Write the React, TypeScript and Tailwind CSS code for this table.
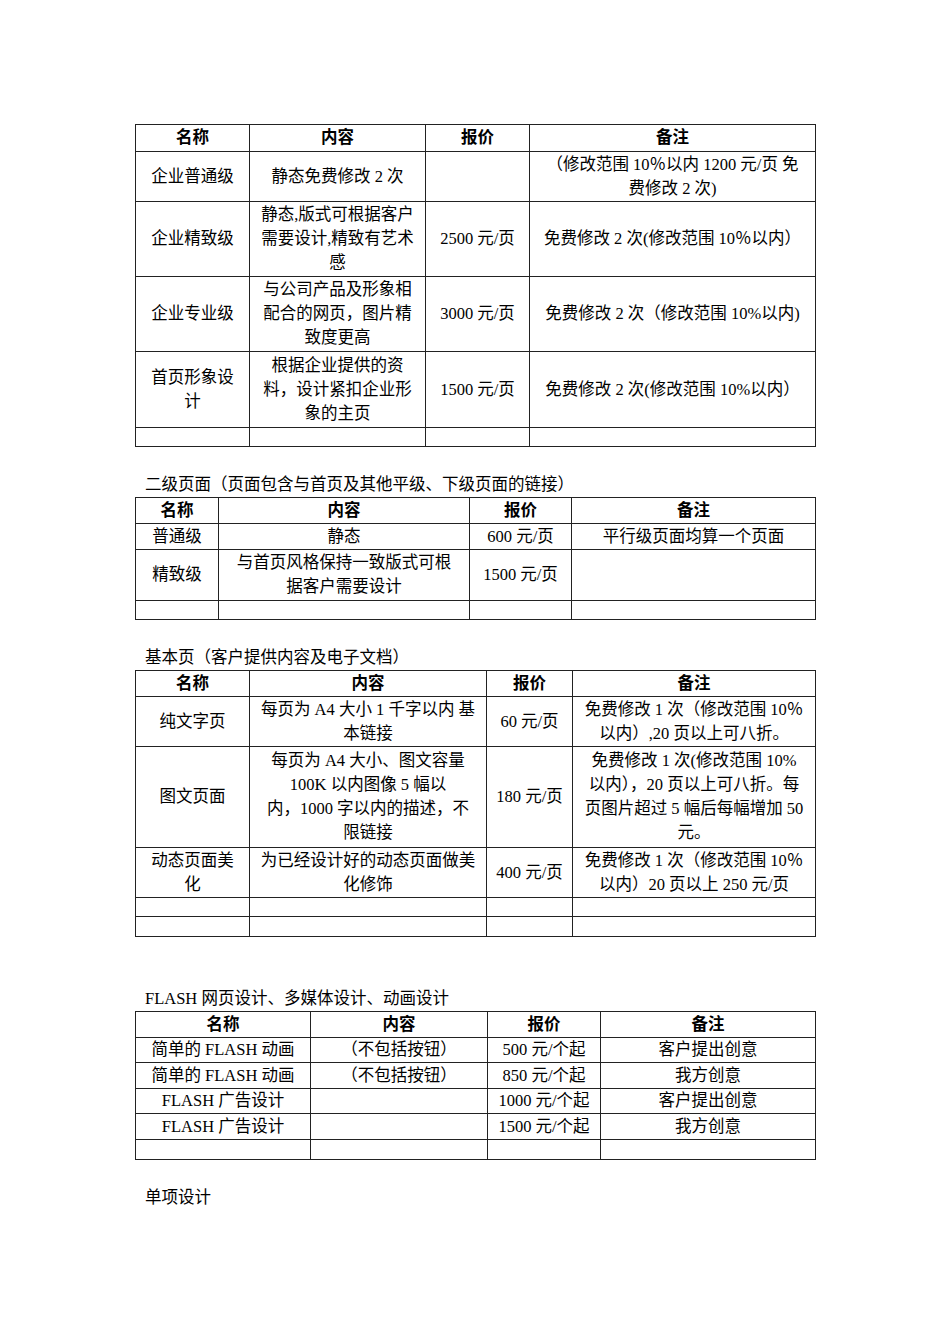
import React from "react";

type Row = { h: number; cells: string[][] };

const FONT = '"Liberation Serif", "Noto Sans CJK SC", serif';

function Cell({ lines, bold }: { lines: string[]; bold?: boolean }) {
  return (
    <td className={`border border-[#222] px-[7px] py-0 text-center align-middle whitespace-nowrap leading-[24px] ${bold ? "font-bold" : ""}`}>
      {lines.map((l, i) => (
        <React.Fragment key={i}>
          {i > 0 && <br />}
          {l}
        </React.Fragment>
      ))}
    </td>
  );
}

function DocTable({ cols, header, rows }: { cols: number[]; header: number; rows: Row[] }) {
  const heads = ["名称", "内容", "报价", "备注"];
  return (
    <table className="w-[680px] table-fixed border-collapse">
      <colgroup>
        {cols.map((w, i) => (
          <col key={i} style={{ width: w }} />
        ))}
      </colgroup>
      <tbody>
        <tr style={{ height: header }}>
          {heads.map((h) => (
            <Cell key={h} lines={[h]} bold />
          ))}
        </tr>
        {rows.map((r, i) => (
          <tr key={i} style={{ height: r.h }}>
            {r.cells.map((c, j) => (
              <Cell key={j} lines={c} />
            ))}
          </tr>
        ))}
      </tbody>
    </table>
  );
}

const t1: Row[] = [
  { h: 50, cells: [["企业普通级"], ["静态免费修改 2 次"], [""], ["（修改范围 10％以内 1200 元/页 免", "费修改 2 次)"]] },
  { h: 75, cells: [["企业精致级"], ["静态,版式可根据客户", "需要设计,精致有艺术", "感"], ["2500 元/页"], ["免费修改 2 次(修改范围 10％以内）"]] },
  { h: 75, cells: [["企业专业级"], ["与公司产品及形象相", "配合的网页，图片精", "致度更高"], ["3000 元/页"], ["免费修改 2 次（修改范围 10%以内)"]] },
  { h: 76, cells: [["首页形象设", "计"], ["根据企业提供的资", "料，设计紧扣企业形", "象的主页"], ["1500 元/页"], ["免费修改 2 次(修改范围 10%以内）"]] },
  { h: 19, cells: [[""], [""], [""], [""]] },
];

const t2: Row[] = [
  { h: 26, cells: [["普通级"], ["静态"], ["600 元/页"], ["平行级页面均算一个页面"]] },
  { h: 51, cells: [["精致级"], ["与首页风格保持一致版式可根", "据客户需要设计"], ["1500 元/页"], [""]] },
  { h: 19, cells: [[""], [""], [""], [""]] },
];

const t3: Row[] = [
  { h: 50, cells: [["纯文字页"], ["每页为 A4 大小 1 千字以内 基", "本链接"], ["60 元/页"], ["免费修改 1 次（修改范围 10％", "以内）,20 页以上可八折。"]] },
  {
    h: 101,
    cells: [
      ["图文页面"],
      ["每页为 A4 大小、图文容量", "100K 以内图像 5 幅以", "内，1000 字以内的描述，不", "限链接"],
      ["180 元/页"],
      ["免费修改 1 次(修改范围 10%", "以内），20 页以上可八折。每", "页图片超过 5 幅后每幅增加 50", "元。"],
    ],
  },
  { h: 50, cells: [["动态页面美", "化"], ["为已经设计好的动态页面做美", "化修饰"], ["400 元/页"], ["免费修改 1 次（修改范围 10％", "以内）20 页以上 250 元/页"]] },
  { h: 19, cells: [[""], [""], [""], [""]] },
  { h: 20, cells: [[""], [""], [""], [""]] },
];

const t4: Row[] = [
  { h: 25, cells: [["简单的 FLASH 动画"], ["（不包括按钮）"], ["500 元/个起"], ["客户提出创意"]] },
  { h: 26, cells: [["简单的 FLASH 动画"], ["（不包括按钮）"], ["850 元/个起"], ["我方创意"]] },
  { h: 25, cells: [["FLASH 广告设计"], [""], ["1000 元/个起"], ["客户提出创意"]] },
  { h: 26, cells: [["FLASH 广告设计"], [""], ["1500 元/个起"], ["我方创意"]] },
  { h: 20, cells: [[""], [""], [""], [""]] },
];

function Title({ children }: { children: React.ReactNode }) {
  return <div className="pl-[10px] h-[25px] leading-[25px] whitespace-nowrap">{children}</div>;
}

export default function App() {
  return (
    <div className="w-[950px] h-[1344px] bg-white text-black text-[16.5px] leading-[25px]" style={{ fontFamily: FONT }}>
      <div className="pl-[135px] pt-[124px] flex flex-col">
        <DocTable cols={[114, 176, 104, 286]} header={27} rows={t1} />
        <div className="h-[25px]" />
        <Title>二级页面（页面包含与首页及其他平级、下级页面的链接）</Title>
        <DocTable cols={[83, 251, 102, 244]} header={26} rows={t2} />
        <div className="h-[25px]" />
        <Title>基本页（客户提供内容及电子文档）</Title>
        <DocTable cols={[114, 237, 86, 243]} header={26} rows={t3} />
        <div className="h-[49px]" />
        <Title>FLASH 网页设计、多媒体设计、动画设计</Title>
        <DocTable cols={[175, 177, 113, 215]} header={26} rows={t4} />
        <div className="h-[25px]" />
        <Title>单项设计</Title>
      </div>
    </div>
  );
}
